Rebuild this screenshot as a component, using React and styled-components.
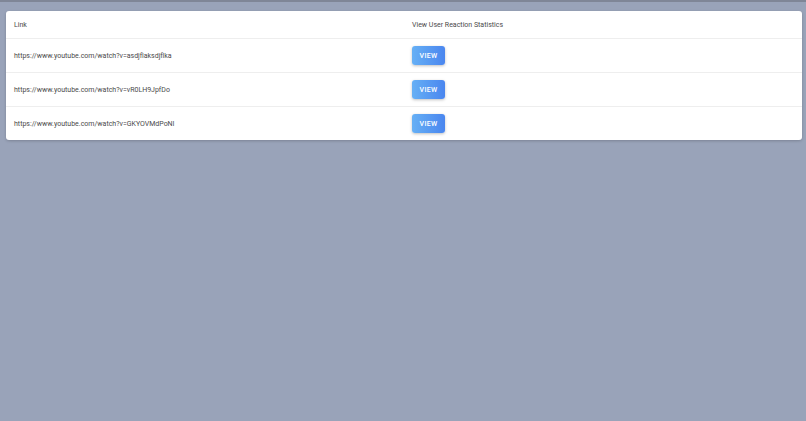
import styled, { createGlobalStyle } from "styled-components";

const GlobalStyle = createGlobalStyle`
  html, body {
    margin: 0;
    padding: 0;
    height: 100%;
    background-color: #99a3b9;
  }
  body {
    font-family: Roboto, "Liberation Sans", sans-serif;
  }
`;

const links = [
  "https://www.youtube.com/watch?v=asdjflaksdjflka",
  "https://www.youtube.com/watch?v=vR0LH9JpfDo",
  "https://www.youtube.com/watch?v=GKYOVMdPoNI",
];

const App = () => {
  return (
    <>
      <GlobalStyle />
      <Page>
        <TopStrip />
        <Wrapper>
          <Card>
            <Table>
              <thead>
                <tr>
                  <HeadCell>Link</HeadCell>
                  <HeadCell>View User Reaction Statistics</HeadCell>
                </tr>
              </thead>
              <tbody>
                {links.map((link) => (
                  <Row key={link}>
                    <Cell>{link}</Cell>
                    <Cell>
                      <ViewButton>VIEW</ViewButton>
                    </Cell>
                  </Row>
                ))}
              </tbody>
            </Table>
          </Card>
        </Wrapper>
      </Page>
    </>
  );
};

const Page = styled.div`
  min-height: 100vh;
  background-color: #99a3b9;
`;

const TopStrip = styled.div`
  height: 2px;
  background-color: #7f8697;
`;

const Wrapper = styled.div`
  padding: 9px 4px 0 6px;
`;

const Card = styled.div`
  background-color: white;
  border-radius: 3px;
  box-shadow: 0 1px 3px rgba(0, 0, 0, 0.2);
  overflow: hidden;
`;

const Table = styled.table`
  width: 100%;
  border-collapse: collapse;
  table-layout: fixed;
`;

const HeadCell = styled.th`
  height: 27px;
  padding: 0 8px;
  text-align: left;
  font-weight: 400;
  font-size: 7px;
  color: #4a4a4a;
  border-bottom: 1px solid #eeeeee;
`;

const Row = styled.tr`
  &:not(:last-of-type) td {
    border-bottom: 1px solid #eeeeee;
  }
`;

const Cell = styled.td`
  height: 33px;
  padding: 0 8px;
  font-size: 7px;
  color: #4a4a4a;
`;

const ViewButton = styled.button`
  width: 33px;
  height: 19px;
  padding: 0;
  border: none;
  border-radius: 3px;
  background: linear-gradient(90deg, #66b0f5, #4a86ef);
  box-shadow: 0 1px 3px rgba(0, 0, 0, 0.25);
  color: white;
  font-family: Roboto, "Liberation Sans", sans-serif;
  font-size: 7px;
  font-weight: 500;
  letter-spacing: 0.3px;
  cursor: pointer;
`;

export default App;
